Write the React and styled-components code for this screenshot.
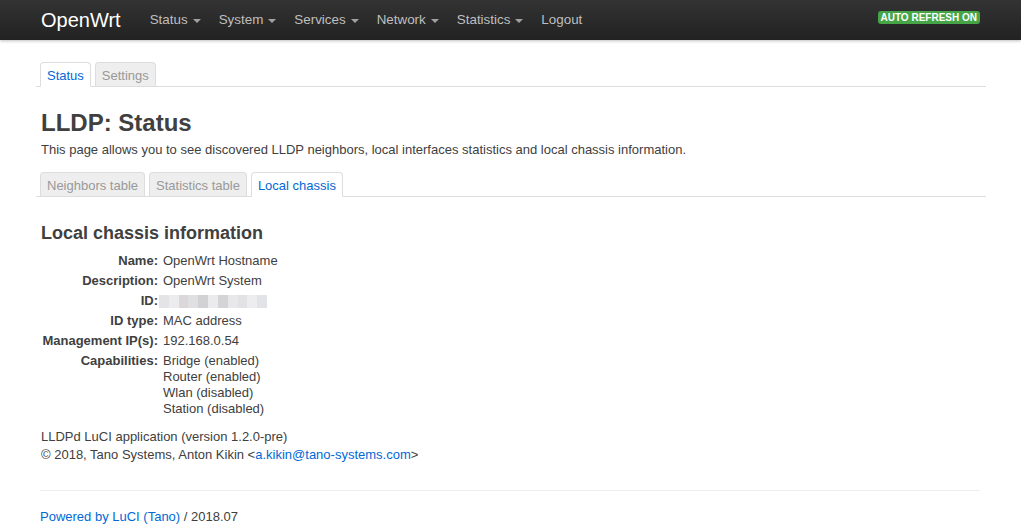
import React from "react";
import styled, { createGlobalStyle } from "styled-components";

const GlobalStyle = createGlobalStyle`
  html, body {
    margin: 0;
    padding: 0;
    background: #fff;
  }
  body {
    font-family: "Liberation Sans", Arial, Helvetica, sans-serif;
    font-size: 13px;
    line-height: 18px;
    color: #404040;
  }
`;

const Topbar = styled.div`
  height: 40px;
  background: linear-gradient(to bottom, #333 0%, #222 100%);
  box-shadow: 0 1px 3px rgba(0, 0, 0, 0.25);
  display: flex;
  align-items: center;
  padding: 0 41px 0 41px;
`;

const Brand = styled.a`
  color: #fff;
  font-size: 20px;
  line-height: 38px;
  margin-right: 29px;
  text-decoration: none;
`;

const NavList = styled.ul`
  display: flex;
  list-style: none;
  margin: 0;
  padding: 0;
  flex: 1;
`;

const NavItem = styled.li`
  color: #bfbfbf;
  font-size: 13.4px;
  line-height: 38px;
  padding: 0 9px;
  display: flex;
  align-items: center;
  &:first-child {
    padding-left: 0;
  }
`;

const Caret = styled.span`
  display: inline-block;
  width: 0;
  height: 0;
  margin-left: 5px;
  margin-top: 2px;
  border-left: 4px solid transparent;
  border-right: 4px solid transparent;
  border-top: 4px solid #bfbfbf;
  opacity: 0.8;
`;

const Badge = styled.span`
  background: #46a546;
  color: #fff;
  font-size: 10px;
  font-weight: bold;
  line-height: 13px;
  padding: 0 3px;
  border-radius: 3px;
  margin-top: -5px;
`;

const Container = styled.div`
  width: 950px;
  margin-left: 36px;
  padding-top: 22px;
`;

const Tabs = styled.ul`
  display: flex;
  list-style: none;
  margin: 0;
  padding: 0 0 0 4px;
  border-bottom: 1px solid #ddd;
  gap: 4px;
`;

const Tab = styled.li`
  padding: 2px 6px 0;
  line-height: 21px;
  height: 21px;
  border: 1px solid #ddd;
  border-bottom: ${(p) => (p.$active ? "1px solid #fff" : "none")};
  border-radius: 4px 4px 0 0;
  margin-bottom: -1px;
  background: ${(p) => (p.$active ? "#fff" : "#eee")};
  color: ${(p) => (p.$active ? "#0069d6" : "#999")};
  font-size: 13px;
`;

const Content = styled.div`
  padding: 0 5px;
`;

const Title = styled.h2`
  font-size: 24px;
  font-weight: bold;
  line-height: 36px;
  margin: 18px 0 0;
  color: #404040;
`;

const Description = styled.p`
  margin: 0 0 13px;
`;

const SectionTitle = styled.h3`
  font-size: 18px;
  font-weight: bold;
  line-height: 27px;
  margin: 23px 0 5px;
  color: #404040;
`;

const InfoTable = styled.div`
  display: grid;
  grid-template-columns: 117px auto;
  column-gap: 5px;
  row-gap: 2px;
  justify-content: start;
`;

const Label = styled.div`
  font-weight: bold;
  text-align: right;
  line-height: 18px;
`;

const Value = styled.div`
  line-height: 18px;
`;

const Lines = styled.div`
  line-height: 16px;
  padding-top: 1px;
`;

const Blur = styled.div`
  display: flex;
  height: 13px;
  margin: 3px 0 0 -4px;
  width: 108px;
`;

const BlurCell = styled.span`
  flex: 1;
  background: ${(p) => p.$c};
`;

const About = styled.p`
  margin: 11px 0 0;
`;

const Link = styled.a`
  color: #0069d6;
  text-decoration: none;
`;

const Footer = styled.footer`
  margin: 26px 6px 0 4px;
  border-top: 1px solid #eee;
  padding-top: 17px;
  line-height: 18px;
`;

const blur = ["#e4e4e6", "#ececee", "#dcd8da", "#e0dfe1", "#d2d2d4", "#ebebed", "#d4d4d6", "#e8e8ea", "#e2e2e4", "#ededef", "#e2e3e6"];

const menu = ["Status", "System", "Services", "Network", "Statistics"];

const App = () => {
  return (
    <>
      <GlobalStyle />
      <Topbar>
        <Brand href="#">OpenWrt</Brand>
        <NavList>
          {menu.map((m) => (
            <NavItem key={m}>
              {m}
              <Caret />
            </NavItem>
          ))}
          <NavItem>Logout</NavItem>
        </NavList>
        <Badge>AUTO REFRESH ON</Badge>
      </Topbar>
      <Container>
        <Tabs>
          <Tab $active>Status</Tab>
          <Tab>Settings</Tab>
        </Tabs>
        <Content>
          <Title>LLDP: Status</Title>
          <Description>
            This page allows you to see discovered LLDP neighbors, local interfaces statistics and local chassis information.
          </Description>
        </Content>
        <Tabs>
          <Tab>Neighbors table</Tab>
          <Tab>Statistics table</Tab>
          <Tab $active>Local chassis</Tab>
        </Tabs>
        <Content>
          <SectionTitle>Local chassis information</SectionTitle>
          <InfoTable>
            <Label>Name:</Label>
            <Value>OpenWrt Hostname</Value>
            <Label>Description:</Label>
            <Value>OpenWrt System</Value>
            <Label>ID:</Label>
            <Value>
              <Blur>
                {blur.map((c, i) => (
                  <BlurCell key={i} $c={c} />
                ))}
              </Blur>
            </Value>
            <Label>ID type:</Label>
            <Value>MAC address</Value>
            <Label>Management IP(s):</Label>
            <Value>192.168.0.54</Value>
            <Label>Capabilities:</Label>
            <Lines>
              Bridge (enabled)
              <br />
              Router (enabled)
              <br />
              Wlan (disabled)
              <br />
              Station (disabled)
            </Lines>
          </InfoTable>
          <About>
            LLDPd LuCI application (version 1.2.0-pre)
            <br />
            © 2018, Tano Systems, Anton Kikin &lt;<Link href="#">a.kikin@tano-systems.com</Link>&gt;
          </About>
        </Content>
        <Footer>
          <Link href="#">Powered by LuCI (Tano)</Link> / 2018.07
        </Footer>
      </Container>
    </>
  );
};

export default App;
